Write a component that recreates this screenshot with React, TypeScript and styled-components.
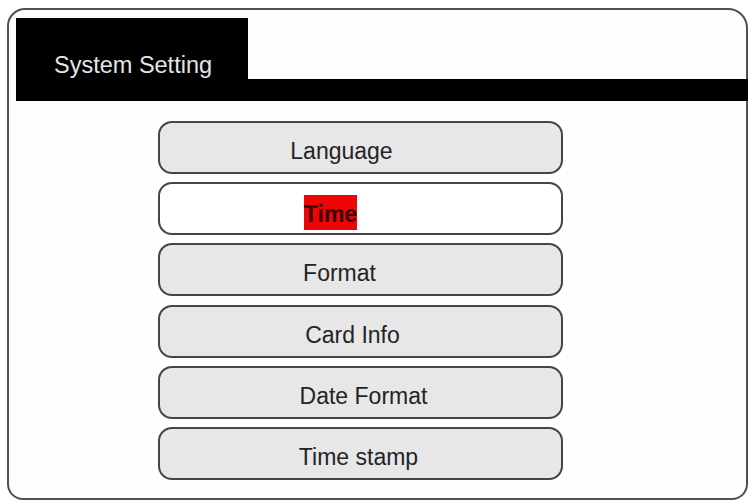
import React from "react";
import styled, { createGlobalStyle } from "styled-components";

const GlobalStyle = createGlobalStyle`
  html, body {
    margin: 0;
    padding: 0;
    background: #ffffff;
  }
  body {
    font-family: "Liberation Sans", Arial, sans-serif;
  }
`;

const Page = styled.div`
  box-sizing: border-box;
  width: 754px;
  height: 504px;
  padding: 8px 6px 4px 7px;
  background: #ffffff;
`;

const Frame = styled.section`
  box-sizing: border-box;
  height: 100%;
  border: 2px solid #505050;
  border-radius: 18px 20px 16px 16px;
  background: #fefefe;
  display: flex;
  flex-direction: column;
`;

const Header = styled.header`
  display: flex;
  flex-direction: column;
  margin: 8px -2px 0 7px;
`;

const Tab = styled.div`
  box-sizing: border-box;
  width: 232px;
  height: 61px;
  padding-left: 38px;
  background: #000000;
  color: #e4e4e4;
  font-size: 23.5px;
  display: flex;
  align-items: flex-end;
  line-height: 1.15;
`;

const Bar = styled.div`
  height: 22px;
  background: #000000;
`;

const Menu = styled.nav`
  display: flex;
  flex-direction: column;
  gap: 8.2px;
  margin: 20px 0 0 149px;
  width: 405px;
`;

const Item = styled.div<{ $active?: boolean }>`
  box-sizing: border-box;
  height: 53px;
  padding-top: 8px;
  border: 2px solid #454545;
  border-radius: 14px;
  background: ${({ $active }) => ($active ? "#ffffff" : "#e7e7e7")};
  display: flex;
  align-items: center;
  justify-content: center;
  color: #242424;
  font-size: 23px;
`;

const Label = styled.span<{ $shift: number }>`
  transform: translateX(${({ $shift }) => $shift}px);
  white-space: nowrap;
`;

const Highlight = styled.span`
  display: inline-block;
  padding: 6px 0 2px;
  background: #ee0505;
  color: #3a0505;
  font-weight: bold;
  line-height: 1.15;
`;

const items = [
  { label: "Language", shift: -19 },
  { label: "Time", shift: -30, active: true },
  { label: "Format", shift: -21 },
  { label: "Card Info", shift: -8 },
  { label: "Date Format", shift: 3 },
  { label: "Time stamp", shift: -2 },
];

export default function App() {
  return (
    <Page>
      <GlobalStyle />
      <Frame>
        <Header>
          <Tab>System Setting</Tab>
          <Bar />
        </Header>
        <Menu>
          {items.map((item) => (
            <Item key={item.label} $active={item.active}>
              <Label $shift={item.shift}>
                {item.active ? <Highlight>{item.label}</Highlight> : item.label}
              </Label>
            </Item>
          ))}
        </Menu>
      </Frame>
    </Page>
  );
}
